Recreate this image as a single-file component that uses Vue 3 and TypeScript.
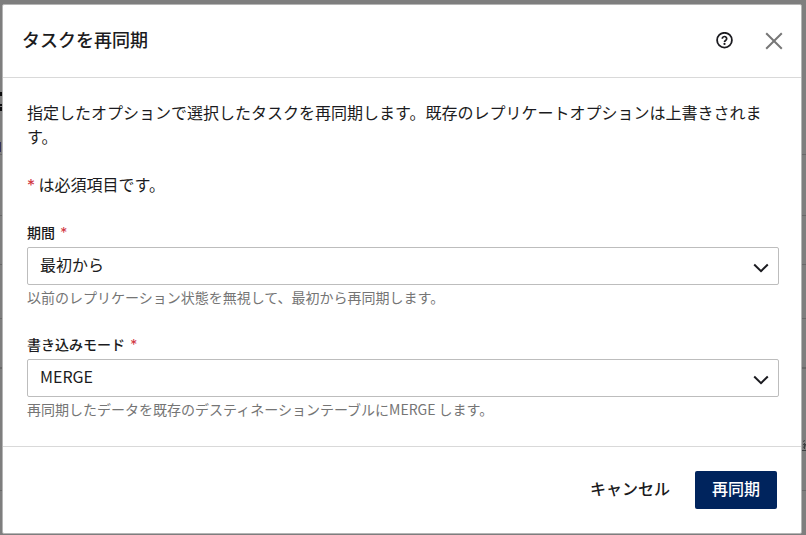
<script setup lang="ts">
import { ref } from 'vue'

interface Field {
  id: string
  label: string
  options: string[]
  help: string
}

const fields: Field[] = [
  {
    id: 'period',
    label: '期間',
    options: ['最初から'],
    help: '以前のレプリケーション状態を無視して、最初から再同期します。',
  },
  {
    id: 'write-mode',
    label: '書き込みモード',
    options: ['MERGE'],
    help: '再同期したデータを既存のデスティネーションテーブルにMERGE します。',
  },
]

const values = ref<Record<string, string>>({ period: '最初から', 'write-mode': 'MERGE' })
</script>

<template>
  <div class="screen">
    <div class="backdrop" aria-hidden="true">
      <i class="row heading"></i>
      <i class="row tab"></i>
      <i class="row tall"></i>
      <i class="row"></i>
      <i class="row thick"></i>
      <i class="row last"></i>
      <svg class="edge left" width="3" height="62" viewBox="0 0 3 62">
        <path d="M0 0h2v4H0zM0 12h2v2H0zM0 15h3v4H0z" fill="#0c0c0e" />
        <path d="M0 50h1v10H0z" fill="#34345c" />
      </svg>
      <svg class="edge right" width="4" height="12" viewBox="0 0 4 12" fill="none" stroke="#3c3f40">
        <path d="M1 1.500 3 .5M1 4.500h3M1 7.500 4 5.500M0 10.500h4M2.500 3v6" />
      </svg>
    </div>
    <section class="dialog" role="dialog" aria-modal="true" aria-labelledby="dialog-title">
      <header class="header">
        <h1 id="dialog-title">タスクを再同期</h1>
        <div class="tools">
          <button class="icon-button" type="button" aria-label="ヘルプ">
            <svg width="18" height="18" viewBox="0 0 18 18" fill="none" stroke="#1b1b20">
              <circle cx="9.500" cy="8.200" r="7.400" stroke-width="1.800" />
              <path d="M7.300 6.700a2.200 2.100 0 1 1 3.500 1.600C9.900 8.900 9.500 9.100 9.500 9.900" stroke-width="1.700" />
              <circle cx="9.500" cy="11.900" r="1.100" fill="#1b1b20" stroke="none" />
            </svg>
          </button>
          <button class="icon-button" type="button" aria-label="閉じる">
            <svg width="18" height="18" viewBox="0 0 18 18" fill="none" stroke="#777" stroke-width="2">
              <path d="M1.200 1.200 16.800 16.800M16.800 1.200 1.200 16.800" />
            </svg>
          </button>
        </div>
      </header>

      <form id="resync-form" class="body" @submit.prevent>
        <p>指定したオプションで選択したタスクを再同期します。既存のレプリケートオプションは上書きされます。</p>
        <p><span class="required">*</span> は必須項目です。</p>
        <div v-for="field in fields" :key="field.id" class="field">
          <label :for="field.id">{{ field.label }} <span class="required">*</span></label>
          <div class="control">
            <select :id="field.id" v-model="values[field.id]" required :aria-describedby="`${field.id}-help`">
              <option v-for="option in field.options" :key="option">{{ option }}</option>
            </select>
            <svg class="chevron" width="16" height="10" viewBox="0 0 16 10" fill="none" stroke="#1b1b20" stroke-width="2">
              <path d="M1.200 1.500 8 8.200 14.800 1.500" />
            </svg>
          </div>
          <small :id="`${field.id}-help`">{{ field.help }}</small>
        </div>
      </form>

      <footer class="footer">
        <button class="button" type="button">キャンセル</button>
        <button class="button primary" type="submit" form="resync-form">再同期</button>
      </footer>
    </section>
  </div>
</template>

<style>
body {
  background: #7e7e7e;
}
</style>

<style scoped>
.screen,
.screen * {
  box-sizing: border-box;
}

.screen {
  position: relative;
  min-height: 100vh;
  padding: 4px 4px 1px 2px;
  color: #1b1b20;
  font: 16px/24px "Noto Sans CJK JP", sans-serif;
}

.backdrop {
  position: absolute;
  inset: 0;
  display: flex;
  flex-direction: column;
  overflow: hidden;
}

.row {
  flex: none;
  height: 54px;
  border-bottom: 1px solid #686868;
}

.heading {
  height: 155px;
}

.tab {
  height: 61px;
}

.tall {
  height: 49px;
}

.thick {
  height: 50px;
  border-bottom-width: 2px;
}

.last {
  height: 122px;
}

.edge {
  position: absolute;
}

.left {
  top: 92px;
  left: 0;
}

.right {
  top: 440px;
  right: 0;
}

.dialog {
  position: relative;
  background: #fff;
  border: 1px solid #b5b5b5;
  border-radius: 2px;
}

.header {
  display: flex;
  align-items: center;
  justify-content: space-between;
  height: 73px;
  padding: 0 18px 0 19px;
  border-bottom: 1px solid #d9d9d9;
}

h1 {
  margin: 0;
  padding-bottom: 4px;
  font-size: 18px;
  line-height: 24px;
  font-weight: 500;
}

.tools {
  display: flex;
  gap: 32px;
}

button {
  font: inherit;
  color: inherit;
  cursor: pointer;
}

.icon-button {
  padding: 0;
  border: 0;
  background: none;
}

svg {
  display: block;
}

.body {
  padding: 22px 22px 27px 24px;
}

p {
  margin: 0 0 24px;
}

.required {
  color: #d0343c;
  font-family: Inter, sans-serif;
  line-height: 1;
}

.field + .field {
  margin-top: 25px;
}

label {
  display: block;
  margin-bottom: 3px;
  font-size: 14px;
  line-height: 24px;
  font-weight: 500;
}

label .required {
  margin-left: 2px;
  font-weight: 400;
}

.control {
  position: relative;
}

select {
  display: block;
  width: 100%;
  height: 38px;
  padding: 0 40px 4px 12px;
  appearance: none;
  border: 1px solid #bdbdbd;
  border-radius: 2px;
  background: #fff;
  color: inherit;
  font: inherit;
}

.chevron {
  position: absolute;
  top: 16px;
  right: 10px;
  pointer-events: none;
}

small {
  display: block;
  margin-top: 2px;
  color: #757575;
  font-size: 14px;
  line-height: 20px;
}

.footer {
  display: flex;
  justify-content: flex-end;
  gap: 8px;
  padding: 24px;
  border-top: 1px solid #d9d9d9;
}

.button {
  height: 38px;
  padding: 0 17px 4px;
  border: 0;
  border-radius: 2px;
  background: none;
  font-weight: 500;
}

.primary {
  background: #00245d;
  color: #fff;
}
</style>
